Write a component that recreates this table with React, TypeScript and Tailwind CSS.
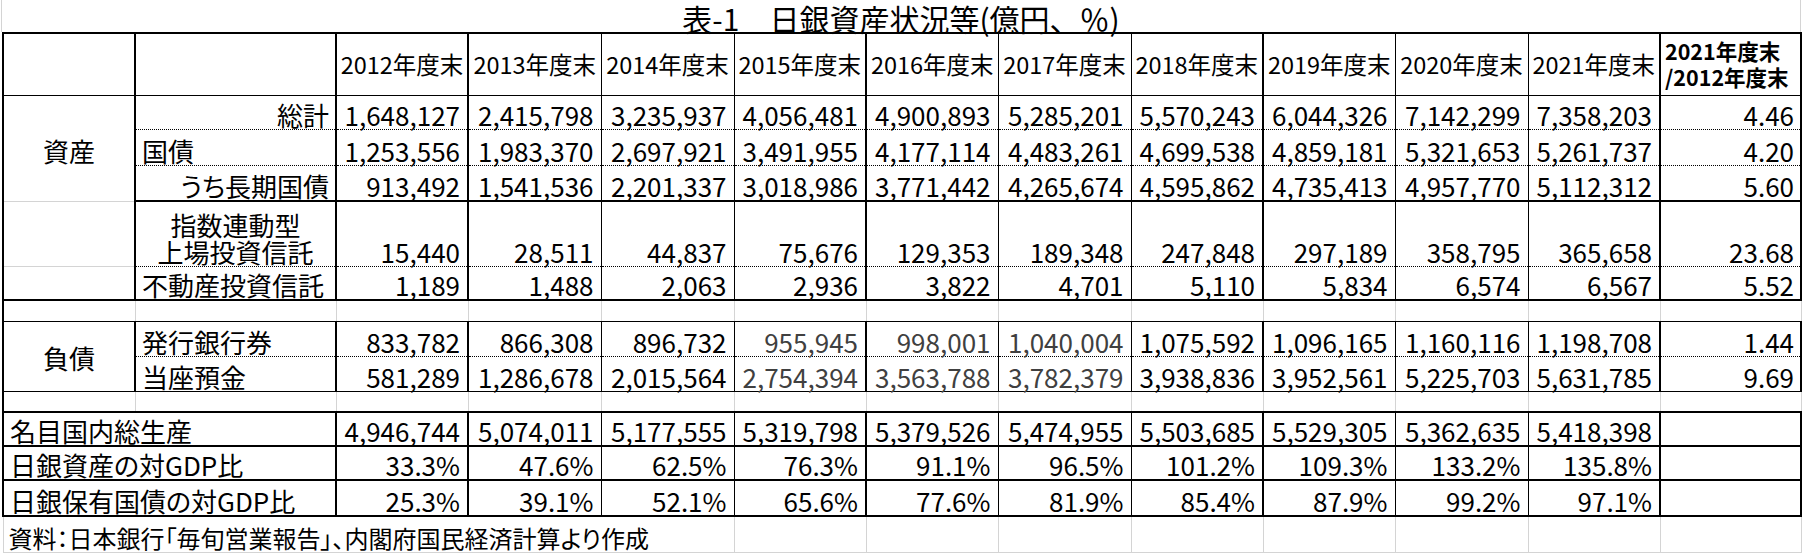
import React from 'react';

const years = ['2012', '2013', '2014', '2015', '2016', '2017', '2018', '2019', '2020', '2021'];

// right border of each column (A, B, 2012..2021, ratio)
const R1 = 'border-r border-r-black';
const R2 = 'border-r-2 border-r-black';
const rightBorder = [R2, R2, R2, R1, R1, R2, R1, R1, R2, R1, R1, R2, R2];
const RG = 'border-r border-r-[#d4d4d4]';

const B_DOT = '[border-bottom:1px_dotted_#000]';
const B1 = 'border-b border-b-black';
const B2 = 'border-b-2 border-b-black';
const B_GRAY = 'border-b border-b-[#d4d4d4]';

const colWidths = [
  'w-[132px]', 'w-[201px]',
  'w-[132px]', 'w-[133px]', 'w-[133px]', 'w-[132px]', 'w-[132px]',
  'w-[133px]', 'w-[132px]', 'w-[132px]', 'w-[133px]', 'w-[132px]',
  'w-[141px]',
];

type DataProps = {
  values: string[];
  ratio?: string;
  bottom: string;
  dim?: number[];
};

const DataCells = ({ values, ratio = '', bottom, dim = [] }: DataProps) => (
  <>
    {values.map((v, i) => (
      <td
        key={i}
        className={`${rightBorder[i + 2]} ${bottom} text-right pr-[7px] align-bottom ${dim.includes(i) ? 'text-[#404040]' : ''}`}
      >
        {v}
      </td>
    ))}
    <td className={`${rightBorder[12]} ${bottom} text-right pr-[6px] align-bottom`}>{ratio}</td>
  </>
);

const EmptyRow = ({ bottom }: { bottom: string }) => (
  <tr className="h-[21px]">
    <td className={`border-l-2 border-l-black ${RG} ${bottom}`} />
    {Array.from({ length: 12 }).map((_, i) => (
      <td key={i} className={`${RG} ${bottom}`} />
    ))}
  </tr>
);

export default function App() {
  return (
    <div className="w-[1804px] h-[554px] overflow-hidden bg-white text-black font-['Noto_Sans_CJK_JP',sans-serif]">
      <div className="ml-[1px] w-[1800px] h-[32px] border-x border-x-[#d4d4d4] text-center text-[30px] leading-[28px] pt-[4px] whitespace-nowrap">
        表-1　日銀資産状況等(億円、％)
      </div>

      <table className="ml-[2px] w-[1798px] table-fixed border-collapse text-[26px] leading-[28px] [font-feature-settings:'palt']">
        <colgroup>
          {colWidths.map((w, i) => (
            <col key={i} className={w} />
          ))}
        </colgroup>
        <tbody>
          {/* header */}
          <tr className="h-[62px]">
            <td className={`border-l-2 border-l-black ${R2} border-t-2 border-t-black ${B1}`} />
            <td className={`${R2} border-t-2 border-t-black ${B1}`} />
            {years.map((y, i) => (
              <td
                key={y}
                className={`${rightBorder[i + 2]} border-t-2 border-t-black ${B1} text-center align-middle text-[23.5px] whitespace-nowrap`}
              >
                {y}年度末
              </td>
            ))}
            <td className={`${R2} border-t-2 border-t-black ${B1} pl-[4px] align-middle text-[21.5px] font-bold whitespace-nowrap`}>
              <div className="leading-[26px]">2021年度末</div>
              <div className="leading-[26px]">/2012年度末</div>
            </td>
          </tr>

          {/* assets */}
          <tr className="h-[34px]">
            <td rowSpan={3} className={`border-l-2 border-l-black ${R2} ${B_GRAY} text-center align-middle pt-[6px]`}>
              資産
            </td>
            <td className={`${R2} ${B_DOT} text-right pr-[6px] align-bottom`}>総計</td>
            <DataCells
              bottom={B_DOT}
              values={['1,648,127', '2,415,798', '3,235,937', '4,056,481', '4,900,893', '5,285,201', '5,570,243', '6,044,326', '7,142,299', '7,358,203']}
              ratio="4.46"
            />
          </tr>
          <tr className="h-[36px]">
            <td className={`${R2} ${B_DOT} pl-[6px] align-bottom`}>国債</td>
            <DataCells
              bottom={B_DOT}
              values={['1,253,556', '1,983,370', '2,697,921', '3,491,955', '4,177,114', '4,483,261', '4,699,538', '4,859,181', '5,321,653', '5,261,737']}
              ratio="4.20"
            />
          </tr>
          <tr className="h-[36px]">
            <td className={`${R2} ${B2} text-right pr-[6px] align-bottom`}>うち長期国債</td>
            <DataCells
              bottom={B2}
              values={['913,492', '1,541,536', '2,201,337', '3,018,986', '3,771,442', '4,265,674', '4,595,862', '4,735,413', '4,957,770', '5,112,312']}
              ratio="5.60"
            />
          </tr>
          <tr className="h-[65px]">
            <td className={`border-l-2 border-l-black ${R2} ${B_GRAY}`} />
            <td className={`${R2} ${B_DOT} text-center align-bottom`}>
              <div className="leading-[27px]">指数連動型</div>
              <div className="leading-[28px]">上場投資信託</div>
            </td>
            <DataCells
              bottom={B_DOT}
              values={['15,440', '28,511', '44,837', '75,676', '129,353', '189,348', '247,848', '297,189', '358,795', '365,658']}
              ratio="23.68"
            />
          </tr>
          <tr className="h-[34px]">
            <td className={`border-l-2 border-l-black ${R2} ${B2}`} />
            <td className={`${R2} ${B2} pl-[6px] align-bottom whitespace-nowrap`}>不動産投資信託</td>
            <DataCells
              bottom={B2}
              values={['1,189', '1,488', '2,063', '2,936', '3,822', '4,701', '5,110', '5,834', '6,574', '6,567']}
              ratio="5.52"
            />
          </tr>

          <EmptyRow bottom={B1} />

          {/* liabilities */}
          <tr className="h-[35px]">
            <td rowSpan={2} className={`border-l-2 border-l-black ${R2} ${B1} text-center align-middle pt-[4px]`}>
              負債
            </td>
            <td className={`${R2} ${B_DOT} pl-[6px] align-bottom`}>発行銀行券</td>
            <DataCells
              bottom={B_DOT}
              dim={[3, 4, 5]}
              values={['833,782', '866,308', '896,732', '955,945', '998,001', '1,040,004', '1,075,592', '1,096,165', '1,160,116', '1,198,708']}
              ratio="1.44"
            />
          </tr>
          <tr className="h-[35px]">
            <td className={`${R2} ${B1} pl-[6px] align-bottom`}>当座預金</td>
            <DataCells
              bottom={B1}
              dim={[3, 4, 5]}
              values={['581,289', '1,286,678', '2,015,564', '2,754,394', '3,563,788', '3,782,379', '3,938,836', '3,952,561', '5,225,703', '5,631,785']}
              ratio="9.69"
            />
          </tr>

          <EmptyRow bottom={B2} />

          {/* GDP */}
          <tr className="h-[34px]">
            <td colSpan={2} className={`border-l-2 border-l-black ${R2} ${B2} pl-[6px] align-bottom`}>名目国内総生産</td>
            <DataCells
              bottom={B2}
              values={['4,946,744', '5,074,011', '5,177,555', '5,319,798', '5,379,526', '5,474,955', '5,503,685', '5,529,305', '5,362,635', '5,418,398']}
            />
          </tr>
          <tr className="h-[34px]">
            <td colSpan={2} className={`border-l-2 border-l-black ${R2} ${B2} pl-[6px] align-bottom`}>日銀資産の対GDP比</td>
            <DataCells
              bottom={B2}
              values={['33.3%', '47.6%', '62.5%', '76.3%', '91.1%', '96.5%', '101.2%', '109.3%', '133.2%', '135.8%']}
            />
          </tr>
          <tr className="h-[36px]">
            <td colSpan={2} className={`border-l-2 border-l-black ${R2} ${B2} pl-[6px] align-bottom`}>日銀保有国債の対GDP比</td>
            <DataCells
              bottom={B2}
              values={['25.3%', '39.1%', '52.1%', '65.6%', '77.6%', '81.9%', '85.4%', '87.9%', '99.2%', '97.1%']}
            />
          </tr>

          {/* source */}
          <tr className="h-[36px]">
            <td colSpan={5} className={`border-l border-l-[#d4d4d4] ${RG} ${B_GRAY} pl-[5px] align-bottom text-[24px] whitespace-nowrap`}>
              資料：日本銀行「毎旬営業報告」、内閣府国民経済計算より作成
            </td>
            {Array.from({ length: 8 }).map((_, i) => (
              <td key={i} className={`${RG} ${B_GRAY}`} />
            ))}
          </tr>
        </tbody>
      </table>
    </div>
  );
}
